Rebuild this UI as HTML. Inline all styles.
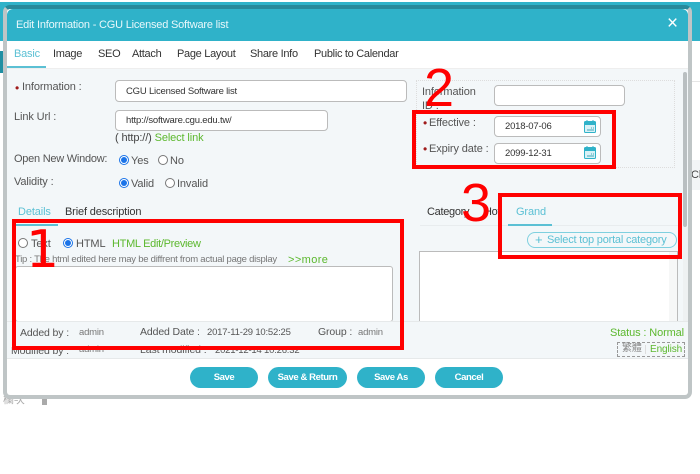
<!DOCTYPE html>
<html><head><meta charset="utf-8"><style>
html,body{margin:0;padding:0;background:#fff}
#p{position:relative;width:700px;height:474px;overflow:hidden;background:#fff;font-family:"Liberation Sans","Noto Sans CJK TC",sans-serif;font-size:11px;color:#555;filter:blur(.3px);letter-spacing:-.12px}
#p div{position:absolute;box-sizing:border-box;white-space:nowrap}
.t{line-height:14px}
.k{color:#333;letter-spacing:-.3px}
.in{background:#fff;border:1px solid #bbb;border-radius:4px;color:#333;font-size:9.5px;letter-spacing:-.2px;line-height:20px;padding-left:10px}
.r{width:10px;height:10px;border:1px solid #777;border-radius:50%;background:#fff}
.r.on{border:1px solid #1a73e8}
.r.on:after{content:"";position:absolute;left:1px;top:1px;width:6px;height:6px;border-radius:50%;background:#1a73e8}
.g{color:#5cb82e}
.b{background:#2fb2c9;color:#fff;font-weight:bold;font-size:9.5px;letter-spacing:-.4px;text-align:center;border-radius:11px;height:21px;line-height:21px}
.red{border:4px solid #f00}
.n{color:#f00;font-size:58px;line-height:58px;letter-spacing:0}
.dot{color:#a01c1c;font-size:12px}
.s{font-size:9.5px;letter-spacing:-.2px}
.m{font-size:10.5px}
</style></head><body><div id="p">
<div style="left:0;top:2px;width:700px;height:39px;background:#2fb2c9"></div>
<div style="left:0;top:41px;width:700px;height:360px;background:#fff"></div>
<div style="left:0;top:51px;width:6px;height:22px;background:#1f8fa3"></div>
<div style="left:690px;top:81px;width:10px;height:1px;background:#e6e6e6"></div>
<div style="left:690px;top:160px;width:10px;height:30px;background:#f2f5f6"></div>
<div class="t" style="left:691px;top:168px;color:#444">Cl</div>
<div class="t" style="left:3px;top:393px;color:#aaa;font-size:11px">欄次</div>
<div style="left:42px;top:393px;width:5px;height:12px;background:#aaa"></div>
<!-- modal -->
<div style="left:3px;top:5px;width:689px;height:394px;border:4px solid #bfc5c6;border-top:4px solid #27899b;border-radius:7px;background:#fff"></div>
<div style="left:7px;top:9px;width:681px;height:32px;background:#2fb2c9;border-radius:6px 6px 0 0"></div>
<div class="t" style="left:16px;top:18px;color:#e9f8fb;font-size:11px;letter-spacing:-.2px">Edit Information - CGU Licensed Software list</div>
<div style="left:667px;top:14px;color:#fff;font-size:19px;line-height:20px">×</div>
<!-- tabs -->
<div style="left:7px;top:68px;width:681px;height:253px;background:#f3f7f9;border-top:1px solid #eee"></div>
<div style="left:7px;top:66px;width:39px;height:2px;background:#5bc0d4"></div>
<div class="t" style="left:14px;top:47px;color:#5bc0d4;letter-spacing:-.2px">Basic</div>
<div class="t k" style="left:53px;top:47px">Image</div>
<div class="t k" style="left:98px;top:47px">SEO</div>
<div class="t k" style="left:132px;top:47px">Attach</div>
<div class="t k" style="left:177px;top:47px">Page Layout</div>
<div class="t k" style="left:250px;top:47px">Share Info</div>
<div class="t k" style="left:314px;top:47px">Public to Calendar</div>
<!-- left form -->
<div class="t dot" style="left:15px;top:81px">•</div>
<div class="t" style="left:22px;top:80px">Information :</div>
<div class="in" style="left:115px;top:80px;width:292px;height:22px;line-height:21px">CGU Licensed Software list</div>
<div class="t" style="left:14px;top:110px">Link Url :</div>
<div class="in" style="left:115px;top:110px;width:213px;height:21px">http://software.cgu.edu.tw/</div>
<div class="t" style="left:115px;top:131px;color:#444">( http://) <span class="g">Select link</span></div>
<div class="t" style="left:14px;top:152px;letter-spacing:-.25px">Open New Window:</div>
<div class="r on" style="left:119px;top:155px"></div><div class="t" style="left:131px;top:154px">Yes</div>
<div class="r" style="left:158px;top:155px"></div><div class="t" style="left:170px;top:154px">No</div>
<div class="t" style="left:14px;top:175px">Validity :</div>
<div class="r on" style="left:119px;top:178px"></div><div class="t" style="left:131px;top:177px">Valid</div>
<div class="r" style="left:165px;top:178px"></div><div class="t" style="left:177px;top:177px">Invalid</div>
<!-- right form -->
<div style="left:416px;top:80px;width:259px;height:88px;border:1px dotted #ddd"></div>
<div class="t" style="left:422px;top:85px">Information</div>
<div class="t" style="left:422px;top:99px">ID :</div>
<div class="in" style="left:494px;top:85px;width:131px;height:21px"></div>
<div class="t dot" style="left:423px;top:116px">•</div><div class="t" style="left:429px;top:116px">Effective :</div>
<div class="in" style="left:494px;top:116px;width:107px;height:21px">2018-07-06</div>
<div class="t dot" style="left:423px;top:142px">•</div><div class="t" style="left:429px;top:142px">Expiry date :</div>
<div class="in" style="left:494px;top:143px;width:107px;height:21px">2099-12-31</div>
<svg style="position:absolute;left:584px;top:120px" width="12" height="13"><rect x=".5" y="1.5" width="11" height="11" rx="1" fill="#d9f1f6" stroke="#2fb2c9"/><rect x="0" y="2" width="12" height="3" fill="#2fb2c9"/><path d="M3 0v2M9 0v2" stroke="#2fb2c9"/><path d="M7 8h1M9 8h1M3 10h7" stroke="#3fa7ba"/></svg>
<svg style="position:absolute;left:584px;top:146px" width="12" height="13"><rect x=".5" y="1.5" width="11" height="11" rx="1" fill="#d9f1f6" stroke="#2fb2c9"/><rect x="0" y="2" width="12" height="3" fill="#2fb2c9"/><path d="M3 0v2M9 0v2" stroke="#2fb2c9"/><path d="M7 8h1M9 8h1M3 10h7" stroke="#3fa7ba"/></svg>
<!-- scrollbar -->
<div style="left:683px;top:227px;width:5px;height:94px;background:#eef1f2"></div>
<div style="left:683px;top:72px;width:4px;height:155px;background:#b9bfc1;border-radius:3px"></div>
<!-- details tabs -->
<div class="t" style="left:18px;top:205px;color:#5bc0d4">Details</div>
<div class="t k" style="left:65px;top:205px;letter-spacing:-.15px">Brief description</div>
<div style="left:15px;top:224px;width:43px;height:2px;background:#5bc0d4"></div>
<div class="r" style="left:18px;top:238px"></div><div class="t" style="left:31px;top:237px">Text</div>
<div class="r on" style="left:63px;top:238px"></div><div class="t" style="left:76px;top:237px">HTML</div>
<div class="t g" style="left:112px;top:237px;letter-spacing:-.3px">HTML Edit/Preview</div>
<div class="t" style="left:15px;top:253px;font-size:9.5px;color:#777;letter-spacing:-.25px">Tip : The html edited here may be diffrent from actual page display</div>
<div class="t g" style="left:288px;top:253px;font-size:11px;letter-spacing:.4px">&gt;&gt;more</div>
<div style="left:15px;top:266px;width:378px;height:56px;background:#fff;border:1px solid #bbb;border-radius:3px"></div>
<!-- right tabs -->
<div style="left:420px;top:225px;width:258px;height:1px;background:#e8ecee"></div>
<div class="t k" style="left:427px;top:205px">Category</div>
<div class="t k" style="left:484px;top:205px">Hot</div>
<div class="t" style="left:516px;top:205px;color:#5bc0d4">Grand</div>
<div style="left:508px;top:224px;width:44px;height:2px;background:#5bc0d4"></div>
<div style="left:527px;top:232px;width:150px;height:16px;border:1px solid #7fd0df;border-radius:8px"></div>
<div class="t" style="left:535px;top:233px;color:#5bc0d4;font-size:13px">+</div>
<div class="t" style="left:547px;top:233px;color:#5bc0d4;letter-spacing:-.2px">Select top portal category</div>
<div style="left:419px;top:251px;width:259px;height:71px;background:#fff;border:1px solid #bbb"></div>
<div style="left:669px;top:252px;width:8px;height:69px;background:#f6f7f7"></div>
<!-- info footer -->
<div style="left:7px;top:321px;width:681px;height:38px;background:#f3f7f9;border-top:1px solid #e6e9ea;border-bottom:1px solid #e6e9ea"></div>
<div class="t m" style="left:20px;top:326px">Added by :</div>
<div class="t s" style="left:79px;top:326px;color:#777">admin</div>
<div class="t m" style="left:140px;top:325px">Added Date :</div>
<div class="t s" style="left:207px;top:326px">2017-11-29 10:52:25</div>
<div class="t m" style="left:318px;top:325px">Group :</div>
<div class="t s" style="left:358px;top:326px;color:#777">admin</div>
<div class="t m" style="left:11px;top:344px">Modified by :</div>
<div class="t s" style="left:79px;top:343px;color:#777">admin</div>
<div class="t m" style="left:140px;top:343px">Last modified :</div>
<div class="t s" style="left:215px;top:344px">2021-12-14 10:26:32</div>
<div class="t g" style="left:610px;top:326px">Status : Normal</div>
<div style="left:617px;top:342px;width:68px;height:15px;border:1px dashed #999"></div>
<div class="t" style="left:622px;top:342px;font-size:10px;color:#888">繁體</div>
<div style="left:645px;top:345px;width:1px;height:9px;background:#ddd"></div>
<div class="t g" style="left:650px;top:343px;font-size:10px;letter-spacing:-.1px">English</div>
<!-- buttons -->
<div class="b" style="left:190px;top:367px;width:68px">Save</div>
<div class="b" style="left:268px;top:367px;width:79px">Save &amp; Return</div>
<div class="b" style="left:357px;top:367px;width:68px">Save As</div>
<div class="b" style="left:435px;top:367px;width:68px">Cancel</div>
<!-- annotations -->
<div class="red" style="left:12px;top:219px;width:392px;height:131px"></div>
<div class="red" style="left:412px;top:110px;width:204px;height:59px"></div>
<div class="red" style="left:498px;top:193px;width:184px;height:66px"></div>
<div class="n" style="left:26px;top:221px;font-size:52px;font-family:'DejaVu Sans',sans-serif">1</div>
<div class="n" style="left:424px;top:59px;font-size:54px">2</div>
<div class="n" style="left:461px;top:174px;font-size:54px">3</div>
</div></body></html>
